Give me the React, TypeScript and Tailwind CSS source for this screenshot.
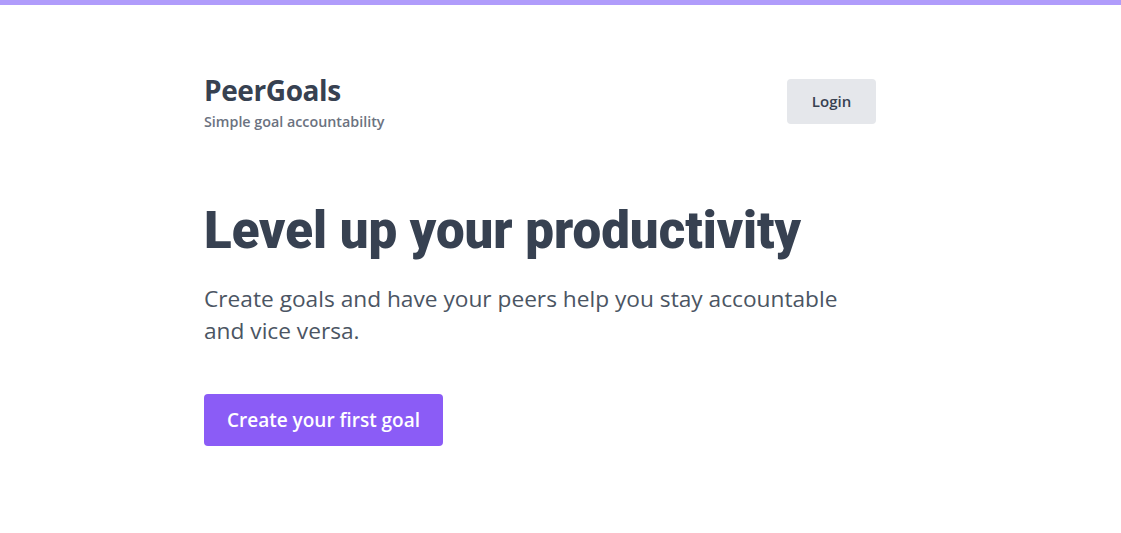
export default function App() {
  return (
    <div className="min-h-[533px] bg-white" style={{ fontFamily: '"Open Sans", "Noto Sans", sans-serif' }}>
      <div className="h-[5px] bg-[#b09cfb]" />
      <div className="ml-[204px] w-[672px] pt-[67px]">
        <header className="flex items-start justify-between">
          <div>
            <h1 className="text-[28px] leading-[36px] font-bold text-[#374151] tracking-[-0.4px]">PeerGoals</h1>
            <p className="text-[14.3px] leading-[20px] font-semibold text-[#6b7280] mt-[4px]">Simple goal accountability</p>
          </div>
          <button className="mt-[7px] w-[89px] h-[45px] rounded bg-[#e5e7eb] text-[15px] font-semibold text-[#374151]">Login</button>
        </header>
        <main className="mt-[69px]">
          <h2 className="text-[51px] leading-[60px] font-black text-[#374151]" style={{ fontFamily: 'Roboto, sans-serif' }}>Level up your productivity</h2>
          <p className="mt-[22px] text-[22.7px] leading-[32px] text-[#4b5563] w-[660px]">
            Create goals and have your peers help you stay accountable and vice versa.
          </p>
          <button className="mt-[47px] w-[239px] h-[52px] rounded bg-[#8b5cf6] text-white text-[19px] font-semibold">
            Create your first goal
          </button>
        </main>
      </div>
    </div>
  );
}
